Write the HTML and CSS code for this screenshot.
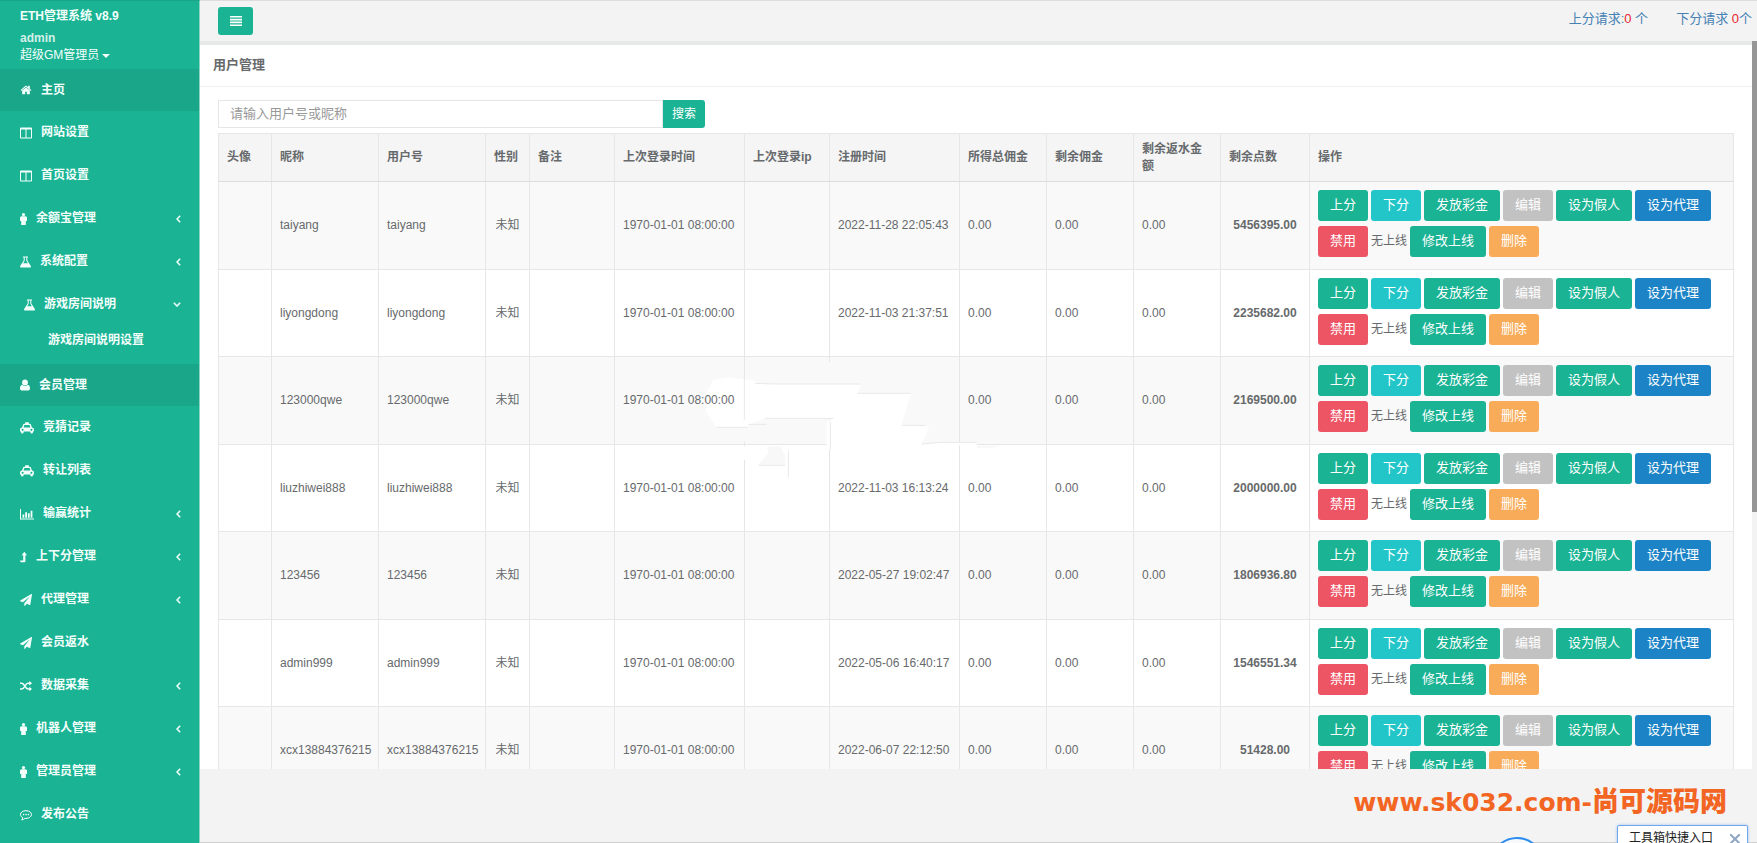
FILE: index.html
```html
<!DOCTYPE html>
<html lang="zh-CN">
<head>
<meta charset="utf-8">
<title>ETH管理系统 v8.9</title>
<link rel="stylesheet" href="styles.css">
</head>
<body>
<svg class="defs" aria-hidden="true">
  <symbol id="home" viewBox="0 0 1792 1792"><path d="M1472 992v480q0 26-19 45t-45 19h-384v-384h-256v384h-384q-26 0-45-19t-19-45v-480q0-1 .5-3t.5-3l575-474 575 474q1 2 1 6zm223-69l-62 74q-8 9-21 11h-3q-13 0-21-7l-692-577-692 577q-12 8-24 7-13-2-21-11l-62-74q-8-10-7-23.500t11-21.500l719-599q32-26 76-26t76 26l244 204v-195q0-14 9-23t23-9h192q14 0 23 9t9 23v408l219 182q10 8 11 21.500t-7 23.500z"/></symbol>
  <symbol id="columns" viewBox="0 0 12 12"><path fill-rule="evenodd" d="M1 .5h10a1 1 0 0 1 1 1v9a1 1 0 0 1-1 1H1a1 1 0 0 1-1-1v-9a1 1 0 0 1 1-1zM1 2.500v8h4.500v-8zM6.500 2.500v8H11v-8z"/></symbol>
  <symbol id="male" viewBox="0 0 7 12"><circle cx="3.500" cy="1.600" r="1.600"/><path d="M1.500 3.200h4A1.500 1.500 0 0 1 7 4.700v2.800a.6.600 0 0 1-1.200 0v4a.7.700 0 0 1-2.300 0 .7.700 0 0 1-2.300 0v-4a.6.600 0 0 1-1.200 0V4.700a1.500 1.500 0 0 1 1.500-1.500z"/></symbol>
  <symbol id="flask" viewBox="0 0 11 12"><path fill-rule="evenodd" d="M3 .5h5v1h-.7v3l3.400 5.200q.8 1.800-1 1.800H1.300q-1.800 0-1-1.800l3.400-5.200v-3H3zM4.700 1.500v3.300L3.200 7.200h4.600L6.300 4.800V1.500z"/></symbol>
  <symbol id="user" viewBox="0 0 10 12"><circle cx="5" cy="3.500" r="2.900"/><path d="M2.200 5.800Q5 8.300 7.800 5.800 10 6.200 10 9.600q0 1.900-1.700 1.900H1.700Q0 11.500 0 9.600 0 6.200 2.200 5.800z"/></symbol>
  <symbol id="cab" viewBox="0 0 14 12"><path fill-rule="evenodd" d="M5.200.3h3.600v1.400h.7q1.200 0 1.500 1l.9 2.900Q14 5.700 14 7.500v2h-1v.7a1.300 1.300 0 0 1-2.600 0v-.7H3.600v.7a1.300 1.300 0 0 1-2.600 0v-.7H0v-2q0-1.800 2.100-1.900L3 2.700q.3-1 1.500-1h.7zM4.400 3l-.8 2.600h6.800L9.600 3zM2.600 6.700a1 1 0 1 0 .01 0zM11.400 6.700a1 1 0 1 0 .01 0z"/></symbol>
  <symbol id="chart" viewBox="0 0 14 12"><path d="M0 1h1v9.500h13v1H0zM2.500 6.500h1.800v3.200H2.500zM5.200 4.300H7v5.400H5.200zM7.900 5.300h1.800v4.400H7.900zM10.600 2.800h1.800v6.900h-1.800z"/></symbol>
  <symbol id="level" viewBox="0 0 7 12"><path d="M4.300.8 7 4.300H5.400v6.200q0 .8-.8.800H.7L0 9.600h3.200V4.300H1.600z"/></symbol>
  <symbol id="plane" viewBox="0 0 1792 1792"><path d="M1764 11q33 24 27 64l-256 1536q-5 29-32 45-14 8-31 8-11 0-24-5l-453-185-242 295q-18 23-49 23-13 0-22-4-19-7-30.500-23.500t-11.500-36.500v-349l864-1059-1069 925-395-162q-37-14-40-55-2-40 32-59l1664-960q15-9 32-9 20 0 36 11z"/></symbol>
  <symbol id="random" viewBox="0 0 12 12"><path class="line" d="M0 3.200h1.700C4.800 3.200 5 9 8 9h2M0 9h1.700C4.800 9 5 3.200 8 3.200h2"/><path d="M9.300.9 12 3.200 9.300 5.500zM9.300 6.700 12 9l-2.700 2.300z"/></symbol>
  <symbol id="comment" viewBox="0 0 12 12"><path class="thin" d="M6 1.700C2.900 1.700.5 3.300.5 5.500c0 1.300.9 2.400 2.300 3.100-.1 1-.5 1.800-1.100 2.400 1.300-.2 2.400-.8 3.200-1.700l1.100.1c3.100 0 5.500-1.700 5.500-3.900S9.100 1.700 6 1.700z"/><circle cx="3.600" cy="5.600" r=".8"/><circle cx="6" cy="5.600" r=".8"/><circle cx="8.400" cy="5.600" r=".8"/></symbol>
  <symbol id="left" viewBox="0 0 5 8"><path class="line" d="M4.200.8 1 4l3.200 3.200"/></symbol>
  <symbol id="down" viewBox="0 0 8 5"><path class="line" d="M.8.8 4 4 7.200.8"/></symbol>
</svg>

<aside class="sidebar">
  <header class="profile">
    <strong class="brand">ETH管理系统 v8.9</strong>
    <strong class="account">admin</strong>
    <a class="role" href="#">超级GM管理员<span class="caret"></span></a>
  </header>
  <nav>
    <ul class="menu">
      <li><a class="item current" href="#"><svg class="i12"><use href="#home"/></svg>主页</a></li>
      <li><a class="item" href="#"><svg class="i12"><use href="#columns"/></svg>网站设置</a></li>
      <li><a class="item" href="#"><svg class="i12"><use href="#columns"/></svg>首页设置</a></li>
      <li><a class="item" href="#"><svg class="i7"><use href="#male"/></svg>余额宝管理<svg class="left"><use href="#left"/></svg></a></li>
      <li><a class="item" href="#"><svg class="i11"><use href="#flask"/></svg>系统配置<svg class="left"><use href="#left"/></svg></a></li>
      <li class="open"><a class="item" href="#"><svg class="i11"><use href="#flask"/></svg>游戏房间说明<svg class="down"><use href="#down"/></svg></a>
        <a class="subitem" href="#">游戏房间说明设置</a></li>
      <li><a class="item current" href="#"><svg class="i10"><use href="#user"/></svg>会员管理</a></li>
      <li><a class="item" href="#"><svg class="i14"><use href="#cab"/></svg>竞猜记录</a></li>
      <li><a class="item" href="#"><svg class="i14"><use href="#cab"/></svg>转让列表</a></li>
      <li><a class="item" href="#"><svg class="i14"><use href="#chart"/></svg>输赢统计<svg class="left"><use href="#left"/></svg></a></li>
      <li><a class="item" href="#"><svg class="i7"><use href="#level"/></svg>上下分管理<svg class="left"><use href="#left"/></svg></a></li>
      <li><a class="item" href="#"><svg class="i12"><use href="#plane"/></svg>代理管理<svg class="left"><use href="#left"/></svg></a></li>
      <li><a class="item" href="#"><svg class="i12"><use href="#plane"/></svg>会员返水</a></li>
      <li><a class="item" href="#"><svg class="i12"><use href="#random"/></svg>数据采集<svg class="left"><use href="#left"/></svg></a></li>
      <li><a class="item" href="#"><svg class="i7"><use href="#male"/></svg>机器人管理<svg class="left"><use href="#left"/></svg></a></li>
      <li><a class="item" href="#"><svg class="i7"><use href="#male"/></svg>管理员管理<svg class="left"><use href="#left"/></svg></a></li>
      <li><a class="item" href="#"><svg class="i12"><use href="#comment"/></svg>发布公告</a></li>
    </ul>
  </nav>
</aside>

<main class="main">
  <header class="topbar">
    <button class="toggle" type="button" aria-label="菜单"><svg viewBox="0 0 12 10"><path d="M0 0h12v1.600H0zM0 2.800h12v1.600H0zM0 5.600h12v1.600H0zM0 8.400h12V10H0z"/></svg></button>
    <div class="requests">
      <a href="#">上分请求:<span class="count">0</span> 个</a>
      <a href="#">下分请求 <span class="count">0</span>个</a>
    </div>
  </header>
  <div class="frame">
    <div class="pane">
      <h1 class="title">用户管理</h1>
      <div class="content">
        <form class="search">
          <input type="text" placeholder="请输入用户号或昵称" aria-label="请输入用户号或昵称">
          <button type="button">搜索</button>
        </form>
        <div class="tablewrap">
          <table class="users">
            <colgroup><col class="c-face"><col class="c-name"><col class="c-name"><col class="c-sex"><col class="c-note"><col class="c-time"><col class="c-note"><col class="c-time"><col class="c-sum"><col class="c-sum"><col class="c-sum"><col class="c-points"><col></colgroup>
            <thead>
              <tr><th>头像</th><th>昵称</th><th>用户号</th><th>性别</th><th>备注</th><th>上次登录时间</th><th>上次登录ip</th><th>注册时间</th><th>所得总佣金</th><th>剩余佣金</th><th>剩余返水金额</th><th>剩余点数</th><th>操作</th></tr>
            </thead>
            <tbody>
              <tr><td></td><td>taiyang</td><td>taiyang</td><td class="mid">未知</td><td></td><td>1970-01-01 08:00:00</td><td></td><td>2022-11-28 22:05:43</td><td>0.00</td><td>0.00</td><td>0.00</td><td class="mid points">5456395.00</td>
                <td class="ops"><div class="actions"><button class="btn green">上分</button><button class="btn cyan">下分</button><button class="btn green">发放彩金</button><button class="btn gray">编辑</button><button class="btn green">设为假人</button><button class="btn blue">设为代理</button><button class="btn red">禁用</button><span>无上线</span><button class="btn green">修改上线</button><button class="btn orange">删除</button></div></td></tr>
              <tr><td></td><td>liyongdong</td><td>liyongdong</td><td class="mid">未知</td><td></td><td>1970-01-01 08:00:00</td><td></td><td>2022-11-03 21:37:51</td><td>0.00</td><td>0.00</td><td>0.00</td><td class="mid points">2235682.00</td>
                <td class="ops"><div class="actions"><button class="btn green">上分</button><button class="btn cyan">下分</button><button class="btn green">发放彩金</button><button class="btn gray">编辑</button><button class="btn green">设为假人</button><button class="btn blue">设为代理</button><button class="btn red">禁用</button><span>无上线</span><button class="btn green">修改上线</button><button class="btn orange">删除</button></div></td></tr>
              <tr><td></td><td>123000qwe</td><td>123000qwe</td><td class="mid">未知</td><td></td><td><span class="raised">1970-01-01 08:00:00</span></td><td></td><td></td><td>0.00</td><td>0.00</td><td>0.00</td><td class="mid points">2169500.00</td>
                <td class="ops"><div class="actions"><button class="btn green">上分</button><button class="btn cyan">下分</button><button class="btn green">发放彩金</button><button class="btn gray">编辑</button><button class="btn green">设为假人</button><button class="btn blue">设为代理</button><button class="btn red">禁用</button><span>无上线</span><button class="btn green">修改上线</button><button class="btn orange">删除</button></div></td></tr>
              <tr><td></td><td>liuzhiwei888</td><td>liuzhiwei888</td><td class="mid">未知</td><td></td><td>1970-01-01 08:00:00</td><td></td><td>2022-11-03 16:13:24</td><td>0.00</td><td>0.00</td><td>0.00</td><td class="mid points">2000000.00</td>
                <td class="ops"><div class="actions"><button class="btn green">上分</button><button class="btn cyan">下分</button><button class="btn green">发放彩金</button><button class="btn gray">编辑</button><button class="btn green">设为假人</button><button class="btn blue">设为代理</button><button class="btn red">禁用</button><span>无上线</span><button class="btn green">修改上线</button><button class="btn orange">删除</button></div></td></tr>
              <tr><td></td><td>123456</td><td>123456</td><td class="mid">未知</td><td></td><td>1970-01-01 08:00:00</td><td></td><td>2022-05-27 19:02:47</td><td>0.00</td><td>0.00</td><td>0.00</td><td class="mid points">1806936.80</td>
                <td class="ops"><div class="actions"><button class="btn green">上分</button><button class="btn cyan">下分</button><button class="btn green">发放彩金</button><button class="btn gray">编辑</button><button class="btn green">设为假人</button><button class="btn blue">设为代理</button><button class="btn red">禁用</button><span>无上线</span><button class="btn green">修改上线</button><button class="btn orange">删除</button></div></td></tr>
              <tr><td></td><td>admin999</td><td>admin999</td><td class="mid">未知</td><td></td><td>1970-01-01 08:00:00</td><td></td><td>2022-05-06 16:40:17</td><td>0.00</td><td>0.00</td><td>0.00</td><td class="mid points">1546551.34</td>
                <td class="ops"><div class="actions"><button class="btn green">上分</button><button class="btn cyan">下分</button><button class="btn green">发放彩金</button><button class="btn gray">编辑</button><button class="btn green">设为假人</button><button class="btn blue">设为代理</button><button class="btn red">禁用</button><span>无上线</span><button class="btn green">修改上线</button><button class="btn orange">删除</button></div></td></tr>
              <tr><td></td><td>xcx13884376215</td><td>xcx13884376215</td><td class="mid">未知</td><td></td><td>1970-01-01 08:00:00</td><td></td><td>2022-06-07 22:12:50</td><td>0.00</td><td>0.00</td><td>0.00</td><td class="mid points">51428.00</td>
                <td class="ops"><div class="actions"><button class="btn green">上分</button><button class="btn cyan">下分</button><button class="btn green">发放彩金</button><button class="btn gray">编辑</button><button class="btn green">设为假人</button><button class="btn blue">设为代理</button><button class="btn red">禁用</button><span>无上线</span><button class="btn green">修改上线</button><button class="btn orange">删除</button></div></td></tr>
            </tbody>
          </table>
          <svg class="patch" viewBox="0 0 1200 420" aria-hidden="true">
            <path fill="#f9f9f9" d="M443 36h15v70h-15zM186 232h14v45h-14z"/>
            <path fill="#fff" d="M100 90 145 82 225 92 240 102 545 102 532 130 692 130 665 225 748 230 725 282 785 277 890 277 890 292 840 292 840 283 830 300 440 300 440 215 460 205 255 205 205 224 205 232 108 232 78 185 78 130z"/>
            <path fill="#fff" d="M186 289h14v40h-14z"/>
            <path fill="#f8f8f8" d="M235 345 265 310 262 290 300 288 316 318 316 345zM890 287h70l-30 8h-40z"/>
            <path fill="none" stroke="#e9e9e9" stroke-width="3" d="M193 80v130M451 215v85M325 303v80M108 232h95M205 223h55M255 205h205M225 100l60 2h258M532 130h160M665 226h70M235 346h80M725 282l60-5h105"/>
          </svg>
        </div>
      </div>
    </div>
    <div class="thumb"></div>
  </div>
  <footer class="foot"></footer>
</main>

<div class="watermark">www.sk032.com-<span>尚可源码网</span></div>
<div class="ball"></div>
<div class="toolbox"><span>工具箱快捷入口</span><button type="button" aria-label="关闭"><svg viewBox="0 0 10 10"><path d="m0 0 10 10M10 0 0 10"/></svg></button></div>
</body>
</html>
```

FILE: styles.css
```css
* { box-sizing: border-box; }

body {
  position: relative;
  display: grid;
  grid-template-columns: 200px 1fr;
  height: 100vh;
  margin: 0;
  overflow: hidden;
  background: #f3f3f3;
  color: #676a6c;
  font: 12px/17px "Liberation Sans", "Noto Sans CJK SC", sans-serif;
}

button, input { font: inherit; }
button { border: 0; padding: 0; }
a { color: inherit; text-decoration: none; }
.defs { position: absolute; width: 0; height: 0; }
.line { fill: none; stroke: currentColor; stroke-width: 1.5; }
.thin { fill: none; stroke: currentColor; stroke-width: 1; }

/* Sidebar */
.sidebar {
  overflow: hidden;
  border-top: 1px solid #1ba587;
  border-right: 1px solid #8ed4c2;
  background: #1ab394;
  color: #f4fffc;
}
.profile {
  display: flex;
  flex-direction: column;
  height: 68px;
  padding: 7px 20px 0;
}
.brand { margin-bottom: 5px; }
.account { color: #d3f0e8; }
.role { display: flex; align-items: center; gap: 3px; }
.caret {
  border: 4px solid transparent;
  border-top-color: currentColor;
  border-bottom: 0;
}
.menu { margin: 0; padding: 0; list-style: none; }
.item {
  display: flex;
  align-items: center;
  gap: 9px;
  height: 43px;
  padding: 0 18px 0 20px;
  font-weight: bold;
}
.item.current { height: 42px; background: #19a689; }
.item svg, .toggle svg { fill: currentColor; }
.i7 { width: 7px; height: 12px; }
.i10 { width: 10px; height: 12px; }
.i11 { width: 11px; height: 12px; }
.i12 { width: 12px; height: 12px; }
.i14 { width: 14px; height: 12px; }
.left { width: 5px; height: 8px; margin-left: auto; }
.down { width: 8px; height: 5px; margin-left: auto; }
.open { padding-bottom: 10px; }
.open .item { padding-left: 24px; }
.subitem {
  display: block;
  padding-left: 48px;
  font-weight: bold;
  line-height: 28px;
}

/* Top bar */
.main {
  display: flex;
  flex-direction: column;
  min-width: 0;
  height: 100vh;
  border-top: 1px solid #dcdcdc;
  border-bottom: 1px solid #d0d0d0;
}
.topbar {
  display: flex;
  justify-content: space-between;
  align-items: center;
  height: 44px;
  flex: none;
  padding: 0 5px 0 18px;
  border-bottom: 4px solid #e7e8e8;
}
.toggle {
  width: 35px;
  height: 28px;
  border-radius: 3px;
  background: #1ab394;
  color: #fff;
}
.toggle svg { display: block; width: 12px; height: 10px; margin: auto; }
.requests { display: flex; gap: 28px; margin-bottom: 5px; color: #4682b4; font-size: 13px; }
.count { color: #e8262c; }

/* Page */
.frame { position: relative; flex: 1; min-height: 0; }
.pane { height: 100%; margin-right: 5px; overflow: hidden; background: #fff; }
.thumb {
  position: absolute;
  top: -4px;
  right: 0;
  width: 5px;
  height: 65%;
  background: #969696;
}
.foot { flex: none; height: 73px; }
.title {
  margin: 0;
  padding: 0 13px 2px;
  border-bottom: 1px solid #eeefef;
  font-size: 13px;
  line-height: 39px;
}
.content { padding: 13px 18px 0; }
.search { display: flex; width: 487px; height: 28px; margin-bottom: 5px; }
.search input {
  flex: 1;
  min-width: 0;
  padding: 0 11px 2px;
  border: 1px solid #e5e6e7;
  background: #fff;
  font-size: 13px;
}
.search input::placeholder { color: #999; }
.search button {
  width: 42px;
  border-radius: 0 3px 3px 0;
  background: #1ab394;
  color: #fff;
}

/* Table */
.tablewrap { position: relative; }
.users {
  width: 100%;
  border-collapse: collapse;
  border: 1px solid #e7e7e7;
  table-layout: fixed;
}
.users th, .users td {
  padding: 0 8px;
  border: 1px solid #e7e7e7;
  text-align: left;
  vertical-align: middle;
}
.users th { height: 48px; background: #f5f5f6; border-bottom-color: #ddd; }
.users tbody tr { height: 87px; }
.users tbody tr:nth-child(odd) { height: 88px; background: #f9f9f9; }
.users td.mid { padding: 0; text-align: center; }
.users td.ops { padding: 8px 8px 0; vertical-align: top; }
.points { font-weight: bold; }
.c-face { width: 53px; }
.c-name { width: 107px; }
.c-sex { width: 44px; }
.c-note { width: 85px; }
.c-time { width: 130px; }
.c-sum { width: 87px; }
.c-points { width: 89px; }
.raised { position: relative; z-index: 2; }
.patch {
  position: absolute;
  top: 217px;
  left: 462px;
  width: 400px;
  height: 140px;
}

.actions { display: flex; flex-wrap: wrap; align-items: center; gap: 5px 3px; }
.btn {
  height: 31px;
  padding: 0 12px 2px;
  border-radius: 3px;
  color: #fff;
  font-size: 13px;
}
.green { background: #1ab394; }
.cyan { background: #23c6c8; }
.gray { background: #c2c2c2; }
.blue { background: #1c84c6; }
.red { background: #ed5565; }
.orange { background: #f8ac59; }

/* Floating layer */
.watermark {
  position: absolute;
  right: 30px;
  bottom: 22px;
  color: #f26522;
  font: bold 25px/36px "DejaVu Sans", "Noto Sans CJK SC", sans-serif;
}
.watermark span { font-size: 27px; font-weight: 900; }
.ball {
  position: absolute;
  right: 213px;
  bottom: -48px;
  width: 54px;
  height: 54px;
  border: 2px solid #2d8cf0;
  border-radius: 50%;
  background: #f7f9fb;
}
.toolbox {
  position: absolute;
  right: 9px;
  bottom: -10px;
  display: flex;
  justify-content: space-between;
  width: 131px;
  height: 28px;
  padding: 4px 7px 0 11px;
  border: 1px solid #6fa8f0;
  border-radius: 2px;
  background: #fff;
  box-shadow: 0 0 3px #9bbce8;
  color: #222;
}
.toolbox button { width: 10px; height: 17px; background: none; }
.toolbox svg { display: block; width: 10px; height: 10px; fill: none; stroke: #8fa6c4; stroke-width: 2; }
```
